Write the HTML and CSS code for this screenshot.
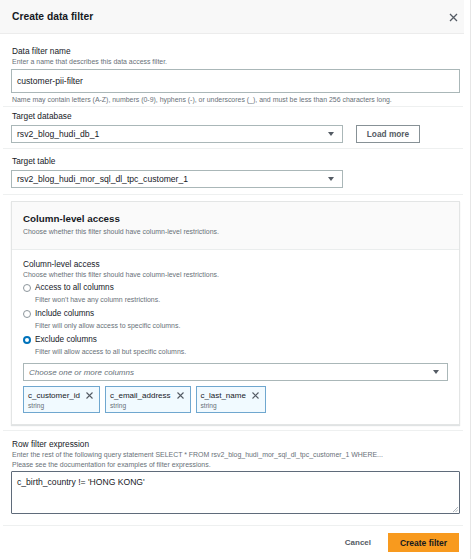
FILE: index.html
```html
<!DOCTYPE html>
<html lang="en">
<head>
<meta charset="utf-8">
<title>Create data filter</title>
<link rel="stylesheet" href="styles.css">
</head>
<body>
<div class="page">
  <div class="modal">
    <header class="modal-header">
      <h1 class="title">Create data filter</h1>
      <svg class="close" width="9" height="9" viewBox="0 0 9 9"><path d="M1 1L8 8M8 1L1 8" stroke="#545b64" stroke-width="1.3" fill="none"/></svg>
    </header>

    <section class="sec sec-name">
      <div class="label">Data filter name</div>
      <div class="desc">Enter a name that describes this data access filter.</div>
      <div class="input">customer-pii-filter</div>
      <div class="desc hint">Name may contain letters (A-Z), numbers (0-9), hyphens (-), or underscores (_), and must be less than 256 characters long.</div>
    </section>

    <section class="sec sec-db">
      <div class="label">Target database</div>
      <div class="row">
        <div class="select"><span>rsv2_blog_hudi_db_1</span><svg class="caret" width="6" height="4" viewBox="0 0 6 4"><path d="M0 0H6L3 4Z" fill="#545b64"/></svg></div>
        <div class="btn-normal">Load more</div>
      </div>
    </section>

    <section class="sec sec-table">
      <div class="label">Target table</div>
      <div class="select"><span>rsv2_blog_hudi_mor_sql_dl_tpc_customer_1</span><svg class="caret" width="6" height="4" viewBox="0 0 6 4"><path d="M0 0H6L3 4Z" fill="#545b64"/></svg></div>
    </section>

    <section class="sec sec-col">
      <div class="container">
        <div class="container-head">
          <h2 class="heading">Column-level access</h2>
          <div class="desc">Choose whether this filter should have column-level restrictions.</div>
        </div>
        <div class="container-body">
          <div class="label">Column-level access</div>
          <div class="desc">Choose whether this filter should have column-level restrictions.</div>
          <div class="options">
            <div class="option">
              <span class="radio"></span>
              <div class="opt-text">
                <div class="opt-label">Access to all columns</div>
                <div class="desc">Filter won't have any column restrictions.</div>
              </div>
            </div>
            <div class="option">
              <span class="radio"></span>
              <div class="opt-text">
                <div class="opt-label">Include columns</div>
                <div class="desc">Filter will only allow access to specific columns.</div>
              </div>
            </div>
            <div class="option">
              <span class="radio checked"></span>
              <div class="opt-text">
                <div class="opt-label">Exclude columns</div>
                <div class="desc">Filter will allow access to all but specific columns.</div>
              </div>
            </div>
          </div>
          <div class="multiselect"><span class="placeholder">Choose one or more columns</span><svg class="caret" width="6" height="4" viewBox="0 0 6 4"><path d="M0 0H6L3 4Z" fill="#545b64"/></svg></div>
          <div class="tokens">
            <div class="token">
              <div class="token-text"><div class="token-name">c_customer_id</div><div class="token-type">string</div></div>
              <svg class="token-x" width="7" height="7" viewBox="0 0 7 7"><path d="M0.5 0.5L6.5 6.5M6.5 0.5L0.5 6.5" stroke="#545b64" stroke-width="1.1" fill="none"/></svg>
            </div>
            <div class="token">
              <div class="token-text"><div class="token-name">c_email_address</div><div class="token-type">string</div></div>
              <svg class="token-x" width="7" height="7" viewBox="0 0 7 7"><path d="M0.5 0.5L6.5 6.5M6.5 0.5L0.5 6.5" stroke="#545b64" stroke-width="1.1" fill="none"/></svg>
            </div>
            <div class="token">
              <div class="token-text"><div class="token-name">c_last_name</div><div class="token-type">string</div></div>
              <svg class="token-x" width="7" height="7" viewBox="0 0 7 7"><path d="M0.5 0.5L6.5 6.5M6.5 0.5L0.5 6.5" stroke="#545b64" stroke-width="1.1" fill="none"/></svg>
            </div>
          </div>
        </div>
      </div>
    </section>

    <section class="sec sec-row">
      <div class="label">Row filter expression</div>
      <div class="desc">Enter the rest of the following query statement SELECT * FROM rsv2_blog_hudi_mor_sql_dl_tpc_customer_1 WHERE...</div>
      <div class="desc">Please see the documentation for examples of filter expressions.</div>
      <div class="textarea">
        <span>c_birth_country != 'HONG KONG'</span>
        <svg class="grip" width="5" height="5" viewBox="0 0 5 5"><path d="M5 0L0 5M5 2.5L2.5 5" stroke="#9aa3ab" stroke-width="0.8" fill="none"/></svg>
      </div>
    </section>

    <footer class="footer">
      <div class="btn-link">Cancel</div>
      <div class="btn-primary">Create filter</div>
    </footer>
  </div>
</div>
</body>
</html>
```

FILE: styles.css
```css
html, body {
  margin: 0;
  padding: 0;
  background: #ffffff;
}
body {
  font-family: "Liberation Sans", Arial, sans-serif;
  color: #16191f;
}
.page {
  width: 470px;
  height: 559px;
  border-right: 1px solid #e6e6e6;
}
.modal {
  width: 464px;
}
.modal-header {
  background: #f8f8f8;
  border-bottom: 1px solid #ececec;
  display: flex;
  align-items: center;
  justify-content: space-between;
  padding: 1px 6px 0 12px;
  box-sizing: border-box;
  height: 34px;
}
.title {
  margin: 0;
  font-size: 10.3px;
  font-weight: 700;
  line-height: 14px;
}
.close {
  display: block;
}
.sec {
  margin: 0 1px 0 3px;
  padding: 0 3px 0 8px;
  border-bottom: 1px solid #eef0f0;
}
.label {
  font-size: 8.3px;
  line-height: 11px;
  padding-left: 1px;
  white-space: nowrap;
}
.desc {
  font-size: 6.95px;
  line-height: 10px;
  color: #687078;
  padding-left: 1px;
  white-space: nowrap;
}
.sec-name {
  padding-top: 12px;
  padding-bottom: 1px;
}
.input {
  margin-top: 2px;
  height: 22px;
  border: 1px solid #aab7b8;
  font-size: 8.6px;
  line-height: 22px;
  padding-left: 5px;
}
.hint {
  margin-top: 2px;
}
.sec-db {
  padding-top: 4px;
  padding-bottom: 5px;
}
.row {
  display: flex;
  align-items: center;
  gap: 13px;
  margin-top: 3px;
}
.select, .multiselect {
  box-sizing: border-box;
  height: 18px;
}
.select {
  width: 332px;
  border: 1px solid #aab7b8;
  display: flex;
  align-items: center;
  justify-content: space-between;
  padding: 0 8px 0 5px;
  font-size: 8.6px;
}
.caret {
  display: block;
}
.btn-normal {
  width: 64px;
  height: 18px;
  box-sizing: border-box;
  border: 1px solid #879196;
  font-size: 8.3px;
  font-weight: 700;
  color: #545b64;
  display: flex;
  align-items: center;
  justify-content: center;
}
.sec-table {
  padding-top: 7px;
  padding-bottom: 6px;
}
.sec-table .select {
  margin-top: 3px;
}
.sec-col {
  padding-top: 6px;
  padding-bottom: 5px;
}
.container {
  border: 1px solid #e3e5e5;
  box-shadow: 0 1px 1px rgba(0, 28, 36, 0.12);
}
.container-head {
  background: #fafafa;
  border-bottom: 1px solid #eaeded;
  padding: 9px 11px 12px 11px;
}
.heading {
  margin: 0;
  font-size: 9.8px;
  font-weight: 700;
  line-height: 16px;
}
.container-body {
  padding: 9px 11px 11px 11px;
}
.container-body > .label,
.container-body > .desc,
.container-head .desc {
  padding-left: 0;
}
.options {
  margin-top: 2px;
  display: flex;
  flex-direction: column;
  gap: 3px;
}
.option {
  display: flex;
  align-items: flex-start;
  gap: 4px;
}
.radio {
  width: 8px;
  height: 8px;
  box-sizing: border-box;
  border: 1px solid #8d969c;
  border-radius: 50%;
  margin-top: 2px;
  flex: none;
}
.radio.checked {
  border: 2.5px solid #0073bb;
  background: #ffffff;
}
.opt-label {
  font-size: 8.2px;
  line-height: 12px;
}
.opt-text .desc {
  padding-left: 0;
  line-height: 11px;
}
.multiselect {
  margin-top: 6px;
  border: 1px solid #aab7b8;
  display: flex;
  align-items: center;
  justify-content: space-between;
  padding: 0 8px 0 5px;
}
.placeholder {
  font-style: italic;
  font-size: 8px;
  color: #687078;
}
.tokens {
  margin-top: 5px;
  display: flex;
  gap: 5px;
}
.token {
  height: 27px;
  box-sizing: border-box;
  border: 1px solid #6fa7cf;
  background: #f1faff;
  display: flex;
  align-items: flex-start;
  gap: 6px;
  padding: 3px 6px 0 4px;
}
.token-name {
  font-size: 8px;
  line-height: 11px;
}
.token-type {
  font-size: 6.6px;
  line-height: 10px;
  color: #687078;
}
.token-x {
  margin-top: 2px;
  display: block;
}
.sec-row {
  padding-top: 8px;
  padding-bottom: 11px;
}
.textarea {
  position: relative;
  margin-top: 1px;
  height: 43px;
  box-sizing: border-box;
  border: 1px solid #5f6b7a;
  border-radius: 1px;
  padding: 5px 5px;
  font-size: 8.6px;
  line-height: 11px;
}
.grip {
  position: absolute;
  right: 1px;
  bottom: 1px;
}
.footer {
  display: flex;
  justify-content: flex-end;
  align-items: center;
  gap: 17px;
  padding: 7px 5px 0 0;
}
.btn-link {
  font-size: 8px;
  font-weight: 700;
  color: #545b64;
}
.btn-primary {
  width: 71px;
  height: 19px;
  background: #f89a1e;
  color: #16191f;
  font-size: 8.5px;
  font-weight: 700;
  display: flex;
  align-items: center;
  justify-content: center;
}
```
